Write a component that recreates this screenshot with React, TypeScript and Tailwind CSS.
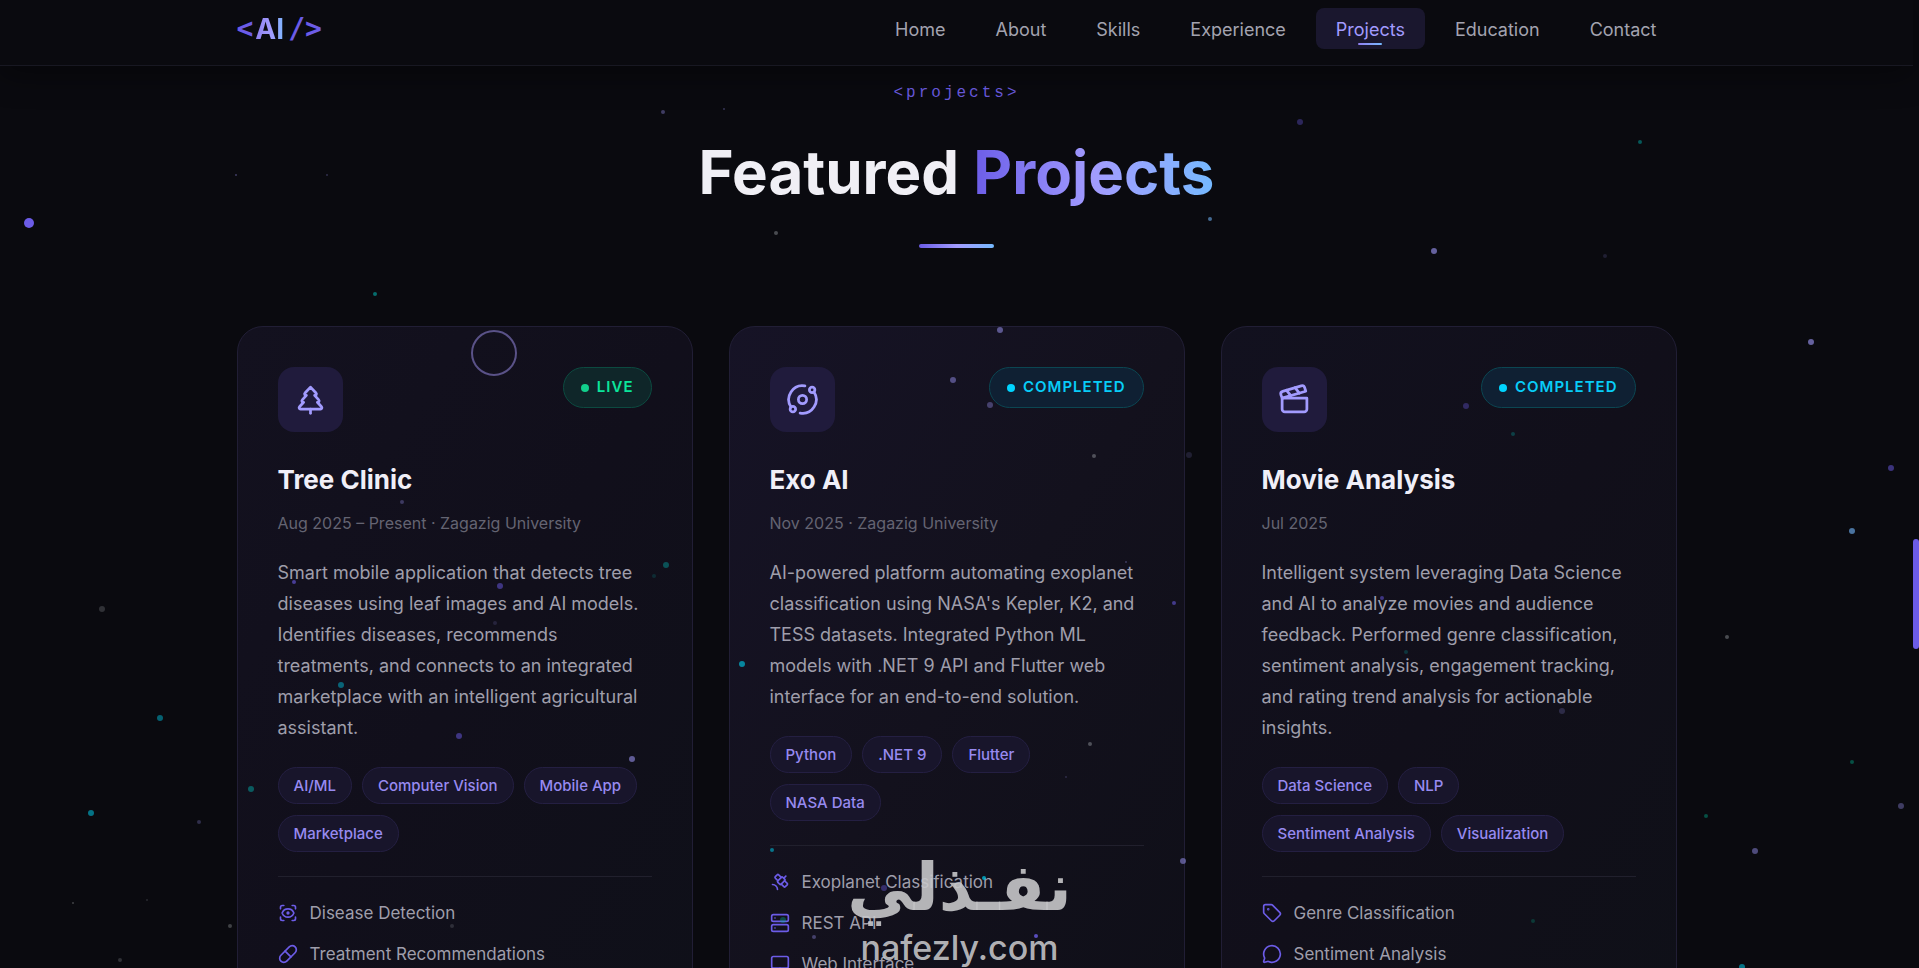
import {
  Clapperboard,
  MessageCircle,
  Monitor,
  Orbit,
  Pill,
  Satellite,
  ScanEye,
  Server,
  Tag,
  TreePine,
  type LucideIcon,
} from "lucide-react";

type Status = "LIVE" | "COMPLETED";

interface Project {
  title: string;
  date: string;
  status: Status;
  icon: LucideIcon;
  description: string;
  tags: string[];
  features: { icon: LucideIcon; label: string }[];
  surface: string;
}

const projects: Project[] = [
  {
    title: "Tree Clinic",
    date: "Aug 2025 – Present · Zagazig University",
    status: "LIVE",
    icon: TreePine,
    description:
      "Smart mobile application that detects tree diseases using leaf images and AI models. Identifies diseases, recommends treatments, and connects to an integrated marketplace with an intelligent agricultural assistant.",
    tags: ["AI/ML", "Computer Vision", "Mobile App", "Marketplace"],
    features: [
      { icon: ScanEye, label: "Disease Detection" },
      { icon: Pill, label: "Treatment Recommendations" },
    ],
    surface: "bg-linear-to-br from-[#13111f] via-[#110f1b] to-[#0f1019]",
  },
  {
    title: "Exo AI",
    date: "Nov 2025 · Zagazig University",
    status: "COMPLETED",
    icon: Orbit,
    description:
      "AI-powered platform automating exoplanet classification using NASA's Kepler, K2, and TESS datasets. Integrated Python ML models with .NET 9 API and Flutter web interface for an end-to-end solution.",
    tags: ["Python", ".NET 9", "Flutter", "NASA Data"],
    features: [
      { icon: Satellite, label: "Exoplanet Classification" },
      { icon: Server, label: "REST API" },
      { icon: Monitor, label: "Web Interface" },
    ],
    surface: "bg-linear-to-br from-[#161326] via-[#13111d] to-[#0f0f18]",
  },
  {
    title: "Movie Analysis",
    date: "Jul 2025",
    status: "COMPLETED",
    icon: Clapperboard,
    description:
      "Intelligent system leveraging Data Science and AI to analyze movies and audience feedback. Performed genre classification, sentiment analysis, engagement tracking, and rating trend analysis for actionable insights.",
    tags: ["Data Science", "NLP", "Sentiment Analysis", "Visualization"],
    features: [
      { icon: Tag, label: "Genre Classification" },
      { icon: MessageCircle, label: "Sentiment Analysis" },
    ],
    surface: "bg-linear-to-br from-[#12111f] via-[#110f1a] to-[#0f1018]",
  },
];

const navItems = ["Home", "About", "Skills", "Experience", "Projects", "Education", "Contact"];

// [x, y, radius, colour, opacity]
const particles: [number, number, number, string, number][] = [
  [663, 112, 2, "#a29bfe", 0.35],
  [724, 109, 1, "#a29bfe", 0.3],
  [1300, 122, 3, "#6c5ce7", 0.35],
  [1640, 142, 2, "#00cec9", 0.4],
  [236, 175, 1, "#a29bfe", 0.35],
  [327, 175, 1, "#a29bfe", 0.25],
  [776, 233, 2, "#dfe6e9", 0.3],
  [1210, 219, 2, "#74b9ff", 0.55],
  [1434, 251, 3, "#a29bfe", 0.6],
  [1605, 256, 2, "#a29bfe", 0.15],
  [375, 294, 2, "#00cec9", 0.5],
  [1811, 342, 3, "#a29bfe", 0.6],
  [1000, 330, 3, "#a29bfe", 0.5],
  [953, 380, 3, "#a29bfe", 0.45],
  [990, 405, 3, "#a29bfe", 0.35],
  [1466, 406, 3, "#6c5ce7", 0.35],
  [1513, 434, 2, "#00cec9", 0.25],
  [1094, 456, 2, "#dfe6e9", 0.3],
  [1189, 455, 3, "#a29bfe", 0.15],
  [1891, 468, 3, "#6c5ce7", 0.5],
  [402, 502, 2, "#a29bfe", 0.3],
  [1852, 531, 3, "#74b9ff", 0.6],
  [1727, 637, 2, "#dfe6e9", 0.3],
  [666, 565, 3, "#00cec9", 0.35],
  [654, 576, 2, "#00cec9", 0.15],
  [294, 582, 2, "#6c5ce7", 0.6],
  [500, 586, 3, "#6c5ce7", 0.5],
  [495, 623, 2, "#a29bfe", 0.15],
  [1126, 562, 1, "#a29bfe", 0.3],
  [1174, 603, 2, "#6c5ce7", 0.55],
  [1382, 598, 2, "#6c5ce7", 0.5],
  [1406, 652, 2, "#00cec9", 0.2],
  [102, 609, 3, "#dfe6e9", 0.18],
  [742, 664, 3, "#00b8d4", 0.7],
  [341, 685, 3, "#00b8d4", 0.5],
  [160, 718, 3, "#00b8d4", 0.5],
  [1562, 711, 3, "#a29bfe", 0.2],
  [459, 736, 3, "#6c5ce7", 0.5],
  [632, 759, 3, "#a29bfe", 0.55],
  [1090, 744, 2, "#dfe6e9", 0.3],
  [1066, 777, 1, "#a29bfe", 0.2],
  [1852, 762, 2, "#00b894", 0.4],
  [251, 789, 3, "#00cec9", 0.4],
  [91, 813, 3, "#00b8d4", 0.6],
  [199, 822, 2, "#a29bfe", 0.25],
  [1706, 816, 2, "#00b894", 0.4],
  [1901, 806, 3, "#a29bfe", 0.35],
  [1755, 851, 3, "#a29bfe", 0.45],
  [772, 850, 2, "#00b8d4", 0.6],
  [1183, 861, 3, "#a29bfe", 0.5],
  [984, 878, 2, "#00b8d4", 0.8],
  [884, 888, 3, "#6c5ce7", 0.4],
  [783, 920, 3, "#00b894", 0.35],
  [814, 937, 2, "#a29bfe", 0.35],
  [1036, 936, 2, "#6c5ce7", 0.8],
  [1533, 921, 2, "#00b894", 0.25],
  [73, 903, 1, "#dfe6e9", 0.25],
  [147, 900, 1, "#dfe6e9", 0.15],
  [230, 926, 2, "#dfe6e9", 0.25],
  [452, 926, 2, "#dfe6e9", 0.15],
  [120, 960, 2, "#dfe6e9", 0.18],
  [1742, 967, 3, "#00b8d4", 0.6],
];

const statusStyles: Record<Status, { badge: string; dot: string }> = {
  LIVE: { badge: "border-[#0c4a40] bg-[#0f2629] text-[#0be59b]", dot: "bg-[#12cf8c]" },
  COMPLETED: { badge: "border-[#0b4652] bg-[#0f2033] text-[#08cdf8]", dot: "bg-[#00d4ff]" },
};

function Header() {
  return (
    <header className="border-b border-[#181822] bg-[#0a0a0f] pt-2 pb-4 shadow-[0_8px_32px_rgba(0,0,0,0.4)]">
      <div className="mx-auto flex max-w-[1440px] items-center justify-between">
        <a href="#home" className="flex items-center gap-0.5 leading-none font-bold text-[#6c5ce7]">
          <span className="font-['DejaVu_Sans_Mono',monospace] text-[28px]">&lt;</span>
          <span className="bg-linear-to-r from-[#8f7ff0] via-[#a29bfe] to-[#74b9ff] bg-clip-text pr-0.5 text-[28px] text-transparent">
            AI
          </span>
          <span className="font-['DejaVu_Sans_Mono',monospace] text-[28px]">/&gt;</span>
        </a>
        <nav className="flex gap-2.5" aria-label="Main">
          {navItems.map((item) => (
            <a
              key={item}
              href={`#${item.toLowerCase()}`}
              className={
                item === "Projects"
                  ? "relative rounded-lg bg-[#1a172e] px-5 pt-[9px] pb-[7px] text-[18px] leading-[25px] text-[#a29bfe]"
                  : "px-5 pt-[9px] pb-[7px] text-[18px] leading-[25px] text-[#a3a3af]"
              }
            >
              {item}
              {item === "Projects" && (
                <span className="absolute bottom-1 left-1/2 h-0.5 w-6 -translate-x-1/2 rounded-full bg-linear-to-r from-[#8f7ff0] to-[#74b9ff]" />
              )}
            </a>
          ))}
        </nav>
      </div>
    </header>
  );
}

function StatusBadge({ status }: { status: Status }) {
  const style = statusStyles[status];
  return (
    <span
      className={`flex h-[41px] items-center gap-2 rounded-full border px-[17px] text-[15px] font-semibold tracking-[1px] ${style.badge}`}
    >
      <span className={`size-2 rounded-full ${style.dot}`} />
      {status}
    </span>
  );
}

function ProjectCard({ project }: { project: Project }) {
  const Icon = project.icon;
  return (
    <article className={`rounded-[26px] border border-[#211e35] p-10 ${project.surface}`}>
      <div className="flex items-start justify-between">
        <div className="flex size-[65px] items-center justify-center rounded-2xl bg-[#201b3c] text-[#a29bfe]">
          <Icon size={33} strokeWidth={2} />
        </div>
        <StatusBadge status={project.status} />
      </div>
      <h3 className="mt-[30px] text-[26px] leading-9 font-bold text-[#f0eff8]">{project.title}</h3>
      <p className="mt-[13px] text-[16px] leading-6 text-[#646472]">{project.date}</p>
      <p className="mt-[22px] text-[18px] leading-[31px] text-[#9f9eab]">{project.description}</p>
      <ul className="mt-6 flex flex-wrap gap-x-2.5 gap-y-[11px]">
        {project.tags.map((tag) => (
          <li
            key={tag}
            className="rounded-full border border-[#241f42] bg-[#18152b] px-[15px] py-[5px] text-[15px] leading-[25px] font-medium text-[#978af0]"
          >
            {tag}
          </li>
        ))}
      </ul>
      <ul className="mt-6 flex flex-col gap-[13px] border-t border-[#21202d] pt-[22px]">
        {project.features.map(({ icon: FeatureIcon, label }) => (
          <li key={label} className="flex items-center gap-3 text-[17px] leading-7 text-[#9f9eab]">
            <FeatureIcon size={20} strokeWidth={2} className="text-[#6c5ce7]" />
            {label}
          </li>
        ))}
      </ul>
    </article>
  );
}

export default function App() {
  return (
    <div className="relative h-screen overflow-hidden bg-[#0a0a0f] pr-1.5 font-['Inter',sans-serif]">
      <Header />
      <main id="projects" className="mx-auto max-w-[1440px] pt-[15px] pb-20">
        <div className="flex flex-col items-center">
          <span className="font-['Liberation_Mono',monospace] text-[16px] leading-6 tracking-[3px] text-[#6556d6]">
            &lt;projects&gt;
          </span>
          <h2 className="mt-[33px] text-[60px] leading-[68px] font-bold text-[#f0eff5]">
            Featured{" "}
            <span className="bg-linear-to-r from-[#6c5ce7] via-[#a29bfe] to-[#74b9ff] bg-clip-text text-transparent">
              Projects
            </span>
          </h2>
          <div className="mt-[38px] h-1 w-[75px] rounded-full bg-linear-to-r from-[#6c5ce7] via-[#a29bfe] to-[#74b9ff]" />
        </div>
        <div className="mt-[78px] grid grid-cols-3 gap-9">
          {projects.map((project) => (
            <ProjectCard key={project.title} project={project} />
          ))}
        </div>
      </main>

      <svg className="pointer-events-none absolute inset-0 size-full" aria-hidden="true">
        {particles.map(([x, y, r, fill, opacity]) => (
          <circle key={`${x}-${y}`} cx={x} cy={y} r={r} fill={fill} opacity={opacity} />
        ))}
        <circle cx="29" cy="223" r="5" fill="#6c5ce7" />
        <circle cx="494" cy="353" r="22" fill="none" stroke="#5a5288" strokeWidth="2" />
      </svg>

      <div className="pointer-events-none absolute bottom-0 left-1/2 flex -translate-x-1/2 flex-col items-center text-[#c6c6c9]/90">
        <span
          dir="rtl"
          lang="ar"
          className="font-['DejaVu_Sans',sans-serif] text-[66px] leading-[80px] font-bold"
        >
          نفـذلي
        </span>
        <span className="text-[34px] leading-10 font-medium">nafezly.com</span>
      </div>

      <div className="absolute top-[539px] right-0 h-[110px] w-1.5 rounded-full bg-[#6c5ce7]" />
    </div>
  );
}
